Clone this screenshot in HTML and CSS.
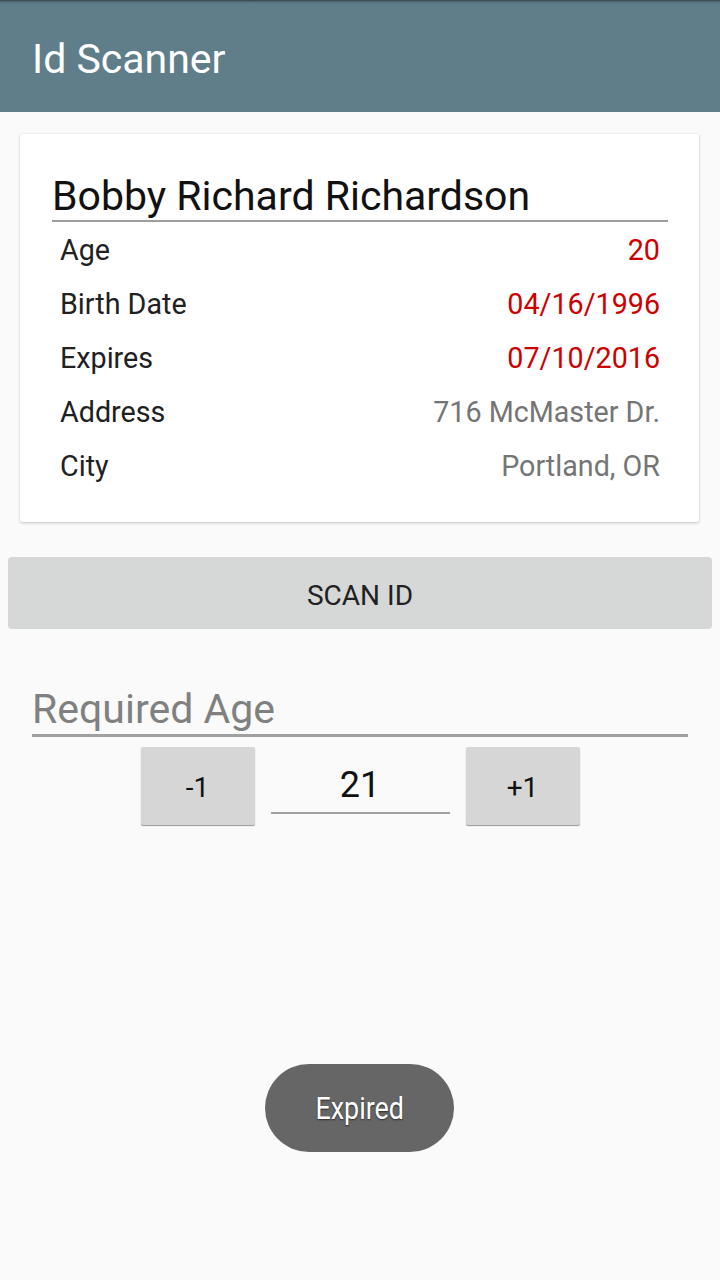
FILE: index.html
```html
<!DOCTYPE html>
<html>
<head>
<meta charset="utf-8">
<link rel="stylesheet" href="styles.css">
</head>
<body>
<header class="appbar"><h1 class="title">Id Scanner</h1></header>
<main class="content">
  <section class="card">
    <div class="name">Bobby Richard Richardson</div>
    <div class="row"><span class="label">Age</span><span class="value red">20</span></div>
    <div class="row"><span class="label">Birth Date</span><span class="value red">04/16/1996</span></div>
    <div class="row"><span class="label">Expires</span><span class="value red">07/10/2016</span></div>
    <div class="row"><span class="label">Address</span><span class="value grey">716 McMaster Dr.</span></div>
    <div class="row"><span class="label">City</span><span class="value grey">Portland, OR</span></div>
  </section>
  <button class="scan">SCAN ID</button>
  <div class="hint">Required Age</div>
  <div class="stepper">
    <button class="step">-1</button>
    <div class="num">21</div>
    <button class="step">+1</button>
  </div>
</main>
<div class="toast"><span class="toast-text">Expired</span></div>
</body>
</html>
```
FILE: styles.css
```css
html, body {
  margin: 0;
  padding: 0;
}
body {
  width: 720px;
  height: 1280px;
  background: #fafafa;
  font-family: Roboto, "Noto Sans", sans-serif;
  position: relative;
  overflow: hidden;
}
.appbar {
  height: 112px;
  background: linear-gradient(to bottom, rgba(0,0,0,0.45) 0px, rgba(0,0,0,0.1) 2px, rgba(0,0,0,0) 4px), #607d8a;
  display: flex;
  align-items: center;
  padding: 5px 0 0 32px;
  box-sizing: border-box;
}
.title {
  margin: 0;
  font-weight: 400;
  font-size: 41px;
  line-height: 48px;
  color: #ffffff;
}
.content {
  display: flex;
  flex-direction: column;
}
.card {
  margin: 22px 21px 0 20px;
  background: #ffffff;
  border-radius: 2px;
  box-shadow: 0 1px 3px rgba(0,0,0,0.22), 0 0 1px rgba(0,0,0,0.08);
  padding: 38px 31px 30px 32px;
}
.name {
  font-size: 41px;
  line-height: 48px;
  color: #111;
  border-bottom: 2px solid #9e9e9e;
  padding-left: 0;
}
.row {
  height: 54px;
  display: flex;
  align-items: center;
  justify-content: space-between;
  padding: 2px 8px 0 8px;
  box-sizing: border-box;
  font-size: 28.7px;
}
.row:first-of-type {
  margin-top: 1px;
}
.label {
  color: #212121;
}
.red {
  color: #cc0000;
}
.grey {
  color: #757575;
}
.scan {
  margin: 35px 8px 0 8px;
  height: 72px;
  border: none;
  border-radius: 4px;
  background: #d6d7d7;
  font-family: Roboto, sans-serif;
  font-size: 28px;
  color: #212121;
  padding: 4px 0 0 0;
}
.hint {
  margin: 56px 32px 0 32px;
  font-size: 41px;
  line-height: 48px;
  color: #808080;
  padding-left: 0;
  padding-bottom: 1px;
  border-bottom: 3px solid #a0a0a0;
}
.stepper {
  margin-top: 10px;
  display: flex;
  justify-content: center;
  align-items: flex-start;
  gap: 16px;
}
.step {
  width: 114px;
  height: 78px;
  border: none;
  border-radius: 2px;
  background: #d6d6d6;
  box-shadow: 0 1px 1px rgba(0,0,0,0.4);
  font-family: Roboto, sans-serif;
  font-size: 28px;
  color: #111;
  padding: 2px 0 0 0;
}
.num {
  width: 179px;
  height: 67px;
  box-sizing: border-box;
  padding-top: 10px;
  border-bottom: 2px solid #a0a0a0;
  display: flex;
  justify-content: center;
  align-items: center;
  font-size: 36px;
  color: #111;
}
.toast {
  position: absolute;
  left: 265px;
  top: 1064px;
  width: 189px;
  height: 88px;
  border-radius: 44px;
  background: #666666;
  display: flex;
  align-items: center;
  justify-content: center;
}
.toast-text {
  display: inline-block;
  font-size: 32px;
  color: #ffffff;
  transform: scaleX(0.84);
  text-shadow: 0 1px 2px rgba(0,0,0,0.6);
}
```
